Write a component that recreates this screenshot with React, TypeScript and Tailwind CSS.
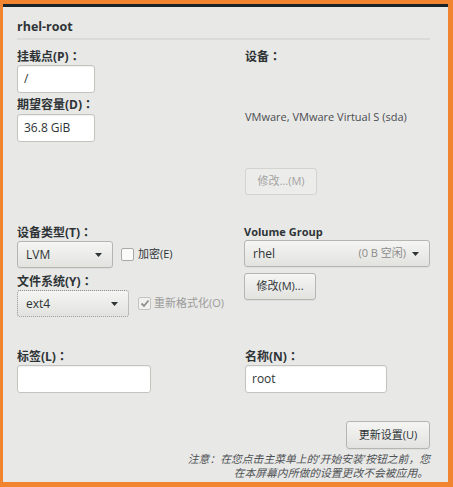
import React from "react";

const FONT = "font-['Open_Sans','Noto_Sans_CJK_SC',sans-serif]";

function Arrow() {
  return (
    <svg width="7" height="4" viewBox="0 0 7 4" className="shrink-0">
      <path d="M0 0 L7 0 L3.5 4 Z" fill="#2e3436" />
    </svg>
  );
}

function Colon() {
  return <span className="font-['Noto_Sans_CJK_TC',sans-serif]">：</span>;
}

function Label({ children }: { children: React.ReactNode }) {
  return <div className="h-[16px] text-[12px] leading-[16px] font-bold text-[#2e3436] whitespace-nowrap">{children}</div>;
}

function Input({ w, value }: { w: string; value?: string }) {
  return (
    <div
      className={`${w} h-[28px] bg-white border border-[#c3c3c0] rounded-[3px] shadow-[inset_0_1px_1px_rgba(0,0,0,0.06)] flex items-center px-[6px] text-[12px] text-[#2e3436]`}
    >
      {value}
    </div>
  );
}

const BTN = "border border-[#b5b5b2] rounded-[3px] bg-linear-to-b from-[#f5f5f3] to-[#e2e2df] shadow-[0_1px_0_rgba(0,0,0,0.04)]";

export default function App() {
  return (
    <div className={`w-[453px] h-[487px] bg-[#f0842f] pt-[4px] pl-[3px] pr-[5px] pb-[5px] ${FONT}`}>
      <div className="w-full h-full flex flex-col">
        <div className="h-[3px] bg-[#17252b]" />
        <div className="flex-1 bg-[#e8e8e7] pl-[14px] pr-[18px] flex flex-col">
          {/* title */}
          <div className="h-[31px] flex items-end pb-[3px] text-[12.5px] font-bold text-[#2e3436] leading-[16px]">
            rhel-root
          </div>
          <div className="h-[2px] bg-[#dbdbd9]" />
          {/* section A */}
          <div className="flex mt-[8px] h-[147px]">
            <div className="w-[228px] flex flex-col">
              <Label>挂载点(P)<Colon /></Label>
              <div className="mt-[1px]">
                <Input w="w-[78px]" value="/" />
              </div>
              <div className="mt-[3px]">
                <Label>期望容量(D)<Colon /></Label>
              </div>
              <div className="mt-[2px]">
                <Input w="w-[78px]" value="36.8 GiB" />
              </div>
            </div>
            <div className="flex-1 flex flex-col">
              <Label>设备<Colon /></Label>
              <div className="mt-[45px] h-[16px] text-[11px] leading-[16px] text-[#4a4d4f]">
                VMware, VMware Virtual S (sda)
              </div>
              <div className="mt-[43px] w-[72px] h-[27px] border border-[#d3d3d0] bg-[#ececeb] rounded-[3px] flex items-center justify-center text-[11px] text-[#a3a3a1]">
                修改...(M)
              </div>
            </div>
          </div>
          {/* section B */}
          <div className="flex mt-[29px] h-[94px]">
            <div className="w-[228px] flex flex-col">
              <Label>设备类型(T)<Colon /></Label>
              <div className="mt-[1px] flex items-center">
                <div className={`w-[96px] h-[27px] ${BTN} flex items-center justify-between pl-[8px] pr-[10px] text-[12px] text-[#2e3436]`}>
                  <span>LVM</span>
                  <Arrow />
                </div>
                <div className="ml-[8px] w-[13px] h-[13px] border border-[#a9a9a6] rounded-[2px] bg-[#fafaf9]" />
                <span className="ml-[4px] text-[11px] text-[#2e3436]">加密(E)</span>
              </div>
              <div className="mt-[5px]">
                <Label>文件系统(Y)<Colon /></Label>
              </div>
              <div className="mt-[1px] flex items-center">
                <div className="w-[112px] h-[27px] border border-dotted border-[#8f8f8c] rounded-[3px] bg-linear-to-b from-[#f5f5f3] to-[#e2e2df] flex items-center justify-between pl-[8px] pr-[10px] text-[12px] text-[#2e3436]">
                  <span>ext4</span>
                  <Arrow />
                </div>
                <div className="ml-[9px] w-[13px] h-[13px] border border-[#c3c3c0] rounded-[2px] bg-[#f1f1f0] flex items-center justify-center">
                  <svg width="10" height="9" viewBox="0 0 10 9">
                    <path d="M1.5 4.5 L4 7 L8.5 1.5" stroke="#8e8e8c" strokeWidth="1.8" fill="none" />
                  </svg>
                </div>
                <span className="ml-[3px] text-[11px] text-[#9b9b99]">重新格式化(O)</span>
              </div>
            </div>
            <div className="flex-1 flex flex-col">
              <div className="h-[16px] text-[11px] leading-[16px] font-bold text-[#2e3436]">Volume Group</div>
              <div className={`w-[186px] h-[27px] ${BTN} flex items-center pl-[8px] pr-[10px] text-[12px] text-[#2e3436]`}>
                <span className="flex-1">rhel</span>
                <span className="text-[11px] text-[#8b8b89] mr-[6px]">(0 B 空闲)</span>
                <Arrow />
              </div>
              <div className={`mt-[6px] w-[72px] h-[27px] ${BTN} flex items-center justify-center text-[11px] text-[#2e3436]`}>
                修改(M)...
              </div>
            </div>
          </div>
          {/* section C */}
          <div className="flex mt-[30px]">
            <div className="w-[228px] flex flex-col">
              <Label>标签(L)<Colon /></Label>
              <div className="mt-[1px]">
                <Input w="w-[134px]" />
              </div>
            </div>
            <div className="flex-1 flex flex-col">
              <Label>名称(N)<Colon /></Label>
              <div className="mt-[1px]">
                <Input w="w-[142px]" value="root" />
              </div>
            </div>
          </div>
          {/* section D */}
          <div className="flex justify-end mt-[28px]">
            <div className={`w-[84px] h-[28px] ${BTN} flex items-center justify-center text-[11px] text-[#2e3436]`}>
              更新设置(U)
            </div>
          </div>
          <div className="mt-[3px] text-right text-[10.8px] leading-[13.5px] italic text-[#4f5254]">
            <div>注意：在您点击主菜单上的'开始安装'按钮之前，您</div>
            <div className="pr-[2px]">在本屏幕内所做的设置更改不会被应用。</div>
          </div>
        </div>
      </div>
    </div>
  );
}
